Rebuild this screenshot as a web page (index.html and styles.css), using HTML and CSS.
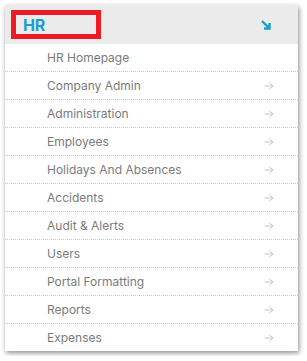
FILE: index.html
```html
<!DOCTYPE html>
<html lang="en">
<head>
  <meta charset="UTF-8">
  <title>HR menu</title>
  <link rel="stylesheet" href="styles.css">
</head>
<body>
  <div class="panel">
    <div class="panel-head">
      <span class="panel-title">HR</span>
      <svg class="head-icon" width="10" height="10" viewBox="0 0 10 10">
        <path d="M1 1 L8.5 8.5 M8.5 3 V8.5 H3" fill="none" stroke="#1aa0cf" stroke-width="2.4"/>
      </svg>
      <div class="highlight"></div>
    </div>
    <ul class="menu">
      <li>HR Homepage</li>
      <li>Company Admin <span class="arrow"></span></li>
      <li>Administration <span class="arrow"></span></li>
      <li>Employees <span class="arrow"></span></li>
      <li>Holidays And Absences <span class="arrow"></span></li>
      <li>Accidents <span class="arrow"></span></li>
      <li>Audit &amp; Alerts <span class="arrow"></span></li>
      <li>Users <span class="arrow"></span></li>
      <li>Portal Formatting <span class="arrow"></span></li>
      <li>Reports <span class="arrow"></span></li>
      <li>Expenses <span class="arrow"></span></li>
    </ul>
  </div>

  <script>
    // fill each arrow slot with the same little svg
    const arrowSvg = '<svg width="10" height="8" viewBox="0 0 10 8"><path d="M0.5 4 H9 M5.5 0.8 L9 4 L5.5 7.2" fill="none" stroke="#c4c4c4" stroke-width="1"/></svg>';
    document.querySelectorAll('.arrow').forEach(a => a.innerHTML = arrowSvg);
  </script>
</body>
</html>
```

FILE: styles.css
```css
body {
  margin: 0;
  padding: 5px;
  background-color: #fff;
  font-family: Inter, "Noto Sans", sans-serif;
}

.panel {
  width: 293px;
  background-color: #fff;
  box-shadow: 1px 2px 5px rgba(0, 0, 0, 0.45);
}

.panel-head {
  position: relative;
  display: flex;
  align-items: center;
  justify-content: space-between;
  height: 39px;
  padding: 0 27px 0 18px;
  box-sizing: border-box;
  background-color: #ebebeb;
}

.panel-title {
  color: #1aa0cf;
  font-weight: 700;
  font-size: 16px;
  letter-spacing: -0.3px;
}

.head-icon {
  display: block;
}

.highlight {
  position: absolute;
  left: 6px;
  top: 5px;
  width: 80px;
  height: 19px;
  border: 5px solid #ed1c24;
}

.menu {
  list-style: none;
  margin: 0;
  padding: 0;
}

.menu li {
  display: flex;
  align-items: center;
  justify-content: space-between;
  height: 27px;
  padding: 0 24px 0 42px;
  border-bottom: 1px dotted #c8c8c8;
  color: #7b7b7b;
  font-size: 12px;
}

.menu li:last-child {
  border-bottom: none;
}

.arrow svg {
  display: block;
}
```
